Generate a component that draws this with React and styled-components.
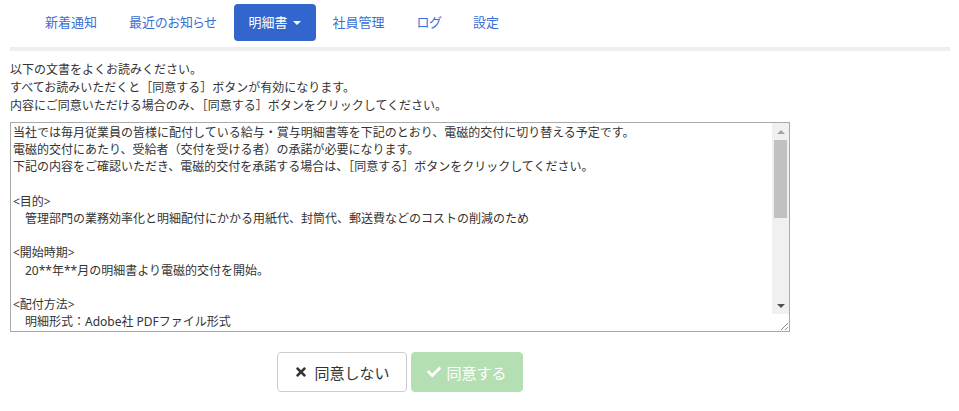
import React from "react"
import styled, { createGlobalStyle } from "styled-components"
import { FaTimes, FaCheck } from "react-icons/fa"

const GlobalStyle = createGlobalStyle`
  body {
    margin: 0;
    background: #fff;
    color: #333;
    font-family: "Noto Sans", "Noto Sans CJK JP", sans-serif;
  }
`

const Page = styled.div`
  padding: 4px 9px 0 10px;
`

const Nav = styled.ul`
  display: flex;
  gap: 2px;
  list-style: none;
  margin: 0;
  padding: 0 0 0 20px;
`

const NavItem = styled.li`
  padding: 10px 15px;
  font-size: 13px;
  line-height: 17px;
  font-feature-settings: "palt";
  border-radius: 4px;
  color: ${props => (props.active ? "#fff" : "#3a6fd6")};
  background: ${props => (props.active ? "#3366cc" : "transparent")};
  display: flex;
  align-items: center;
  gap: 5px;
`

const Caret = styled.span`
  width: 0;
  height: 0;
  border-left: 4px solid transparent;
  border-right: 4px solid transparent;
  border-top: 4px solid #fff;
`

const Divider = styled.div`
  margin-top: 6px;
  height: 4px;
  background: #eeeeee;
`

const Intro = styled.p`
  margin: 10px 0 0;
  font-size: 12px;
  line-height: 18px;
`

const Body = styled.div`
  width: 780px;
  margin-top: 7px;
`

const Frame = styled.div`
  box-sizing: border-box;
  display: flex;
  width: 780px;
  height: 210px;
  border: 1px solid #a9a9a9;
  background: #fff;
`

const Terms = styled.textarea`
  flex: 1;
  display: block;
  margin: 0;
  padding: 1px 2px;
  border: none;
  font-family: "Noto Sans", "Noto Sans CJK JP", sans-serif;
  font-size: 12px;
  line-height: 17.2px;
  color: #333;
  overflow: hidden;
  resize: none;
  outline: none;
`

const ScrollBar = styled.div`
  width: 17px;
  display: flex;
  flex-direction: column;
  background: #f0f0f0;
`

const Arrow = styled.div`
  height: 17px;
  display: flex;
  align-items: center;
  justify-content: center;

  &::before {
    content: "";
    width: 0;
    height: 0;
    border-left: 4px solid transparent;
    border-right: 4px solid transparent;
    ${props =>
      props.down
        ? "border-top: 4px solid #505050;"
        : "border-bottom: 4px solid #a3a3a3;"}
  }
`

const Track = styled.div`
  flex: 1;
`

const Thumb = styled.div`
  height: 78px;
  margin: 0 2px;
  background: #c1c1c1;
`

const Resizer = styled.div`
  height: 17px;
  background: #fff;
  display: flex;
  align-items: flex-end;
  justify-content: flex-end;
`

const Actions = styled.div`
  display: flex;
  justify-content: center;
  gap: 4px;
  margin-top: 20px;
`

const Button = styled.button`
  box-sizing: border-box;
  height: 40px;
  display: flex;
  align-items: center;
  gap: 6px;
  padding: 0 ${props => (props.primary ? "15px" : "16px")};
  border-radius: 4px;
  border: 1px solid ${props => (props.primary ? "#b3dfb3" : "#cccccc")};
  background: ${props => (props.primary ? "#b3dfb3" : "#fff")};
  color: ${props => (props.primary ? "#fff" : "#333")};
  font-family: "Noto Sans", "Noto Sans CJK JP", sans-serif;
  font-size: 15px;
  cursor: ${props => (props.disabled ? "not-allowed" : "pointer")};

  svg {
    font-size: 14px;
  }
`

const tabs = ["新着通知", "最近のお知らせ", "明細書", "社員管理", "ログ", "設定"]

const terms = `当社では毎月従業員の皆様に配付している給与・賞与明細書等を下記のとおり、電磁的交付に切り替える予定です。
電磁的交付にあたり、受給者（交付を受ける者）の承諾が必要になります。
下記の内容をご確認いただき、電磁的交付を承諾する場合は、［同意する］ボタンをクリックしてください。

<目的>
　管理部門の業務効率化と明細配付にかかる用紙代、封筒代、郵送費などのコストの削減のため

<開始時期>
　20**年**月の明細書より電磁的交付を開始。

<配付方法>
　明細形式：Adobe社 PDFファイル形式
　配付時期：給与・賞与の支給日
　閲覧方法：本システムにログインし、明細書メニューより閲覧

<注意事項>
　明細書は各自でダウンロードし、保存してください。
　パスワードは他人に知られないよう管理してください。

<承諾の撤回>
　承諾後に書面での交付を希望する場合は、管理部門までお申し出ください。

以上`

export default function App() {
  return (
    <Page>
      <GlobalStyle />
      <Nav>
        {tabs.map(tab => (
          <NavItem key={tab} active={tab === "明細書"}>
            {tab}
            {tab === "明細書" && <Caret />}
          </NavItem>
        ))}
      </Nav>
      <Divider />
      <Intro>
        以下の文書をよくお読みください。
        <br />
        すべてお読みいただくと［同意する］ボタンが有効になります。
        <br />
        内容にご同意いただける場合のみ、［同意する］ボタンをクリックしてください。
      </Intro>
      <Body>
        <Frame>
          <Terms readOnly defaultValue={terms} />
          <ScrollBar>
            <Arrow />
            <Track>
              <Thumb />
            </Track>
            <Arrow down />
            <Resizer>
              <svg width="17" height="17" viewBox="0 0 17 17">
                <path d="M16 9 L9 16 M16 13 L13 16" stroke="#8a8a8a" strokeWidth="1" fill="none" />
              </svg>
            </Resizer>
          </ScrollBar>
        </Frame>
        <Actions>
          <Button>
            <FaTimes />
            同意しない
          </Button>
          <Button primary disabled>
            <FaCheck />
            同意する
          </Button>
        </Actions>
      </Body>
    </Page>
  )
}
